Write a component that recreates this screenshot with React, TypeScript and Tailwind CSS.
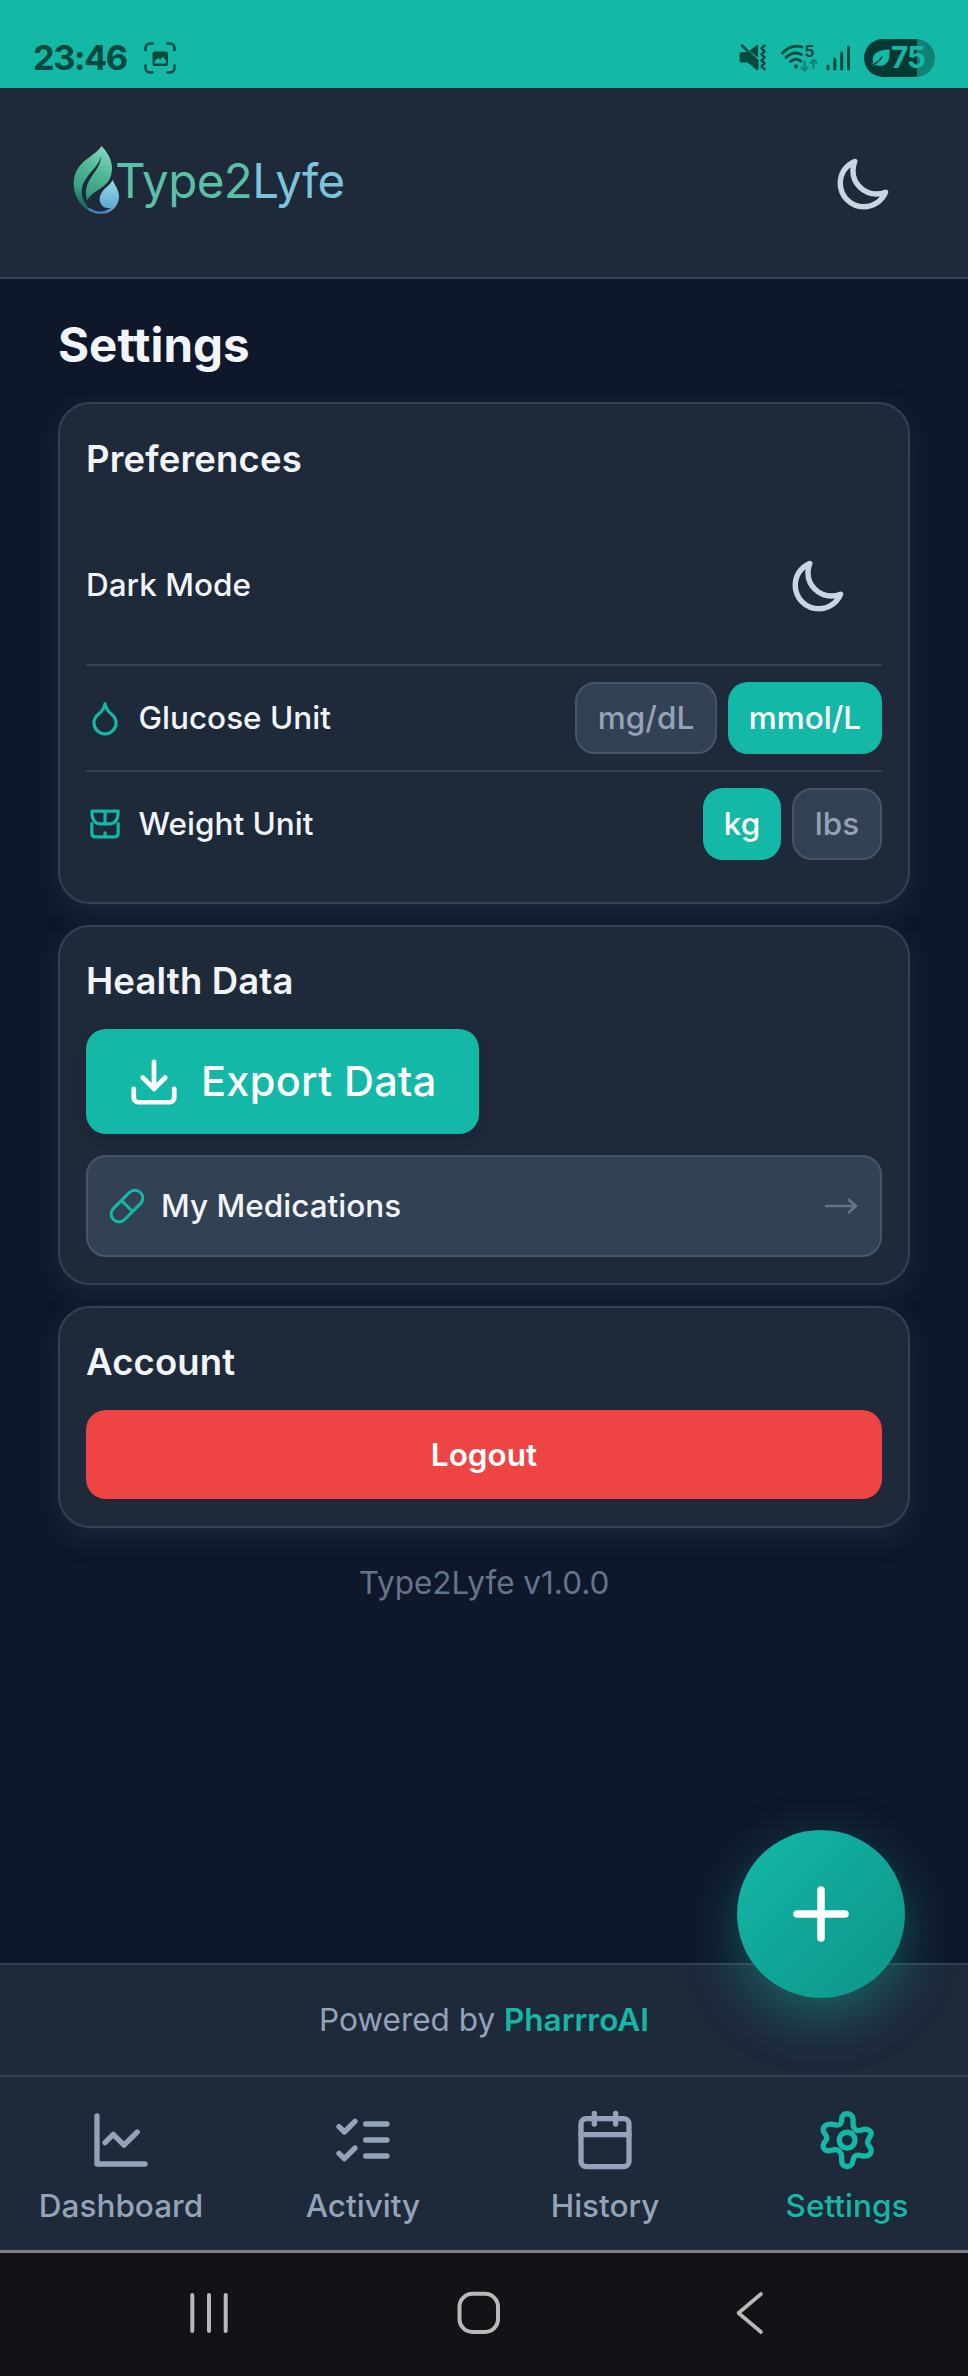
import React from "react";

const MOON =
  "M21.752 15.002A9.718 9.718 0 0 1 18 15.75c-5.385 0-9.75-4.365-9.75-9.75 0-1.33.266-2.597.748-3.752A9.753 9.753 0 0 0 3 11.25C3 16.635 7.365 21 12.75 21a9.753 9.753 0 0 0 9.002-5.998Z";

function Moon() {
  return (
    <svg className="h-[58px] w-[58px] text-[#cbd5e1]" viewBox="0 0 24 24" fill="none" stroke="currentColor" strokeWidth="2.25" strokeLinecap="round" strokeLinejoin="round">
      <path d={MOON} />
    </svg>
  );
}

function Logo() {
  return (
    <svg className="h-[72px] w-[48px]" viewBox="216 433 144 216">
      <defs>
        <linearGradient id="leaf" x1="0.6" y1="0" x2="0.3" y2="1">
          <stop offset="0" stopColor="#7fd4bb" />
          <stop offset="0.35" stopColor="#4fb897" />
          <stop offset="0.7" stopColor="#3c9f82" />
          <stop offset="1" stopColor="#0c5a55" />
        </linearGradient>
        <linearGradient id="drop" x1="0.5" y1="0" x2="0.5" y2="1">
          <stop offset="0" stopColor="#9bd8e6" />
          <stop offset="1" stopColor="#509fd0" />
        </linearGradient>
      </defs>
      <path d="M305 439C290 461 268 470 250 487C230 506 221 527 221 553C221 592 244 622 272 637L274 631C262 622 250 606 246 588C242 566 249 549 262 531C277 511 296 496 303 470C302 500 282 518 269 540C257 560 255 582 261 603C270 586 290 573 307 562C327 549 336 530 336 505C336 478 320 456 305 439Z" fill="url(#leaf)" />
      <path d="M266 627C288 644 318 643 338 623" fill="none" stroke="#4a83bd" strokeWidth="7" />
      <path d="M338 541C344 556 357 570 357 592C357 612 343 634 314 643C326 634 331 629 335 625H323C309 624 299 614 299 598C299 572 329 560 338 541Z" fill="url(#drop)" />
    </svg>
  );
}

function StatusBar() {
  return (
    <div className="flex h-[88px] shrink-0 items-start justify-between bg-[#14b8a6] pr-[33px] pl-[33px] pt-[38px] text-[#05493f]">
      <div className="flex items-center">
        <span className="w-[111px] text-[34.5px] leading-[40px] font-bold tracking-[-1.5px] whitespace-nowrap">23:46</span>
        <svg className="h-[32px] w-[32px]" viewBox="0 0 32 32" fill="none" stroke="currentColor" strokeWidth="2.6" strokeLinecap="round">
          <path d="M1.5 8V6a4.500 4.500 0 0 1 4.500-4.500H8.500M23.500 1.500H26a4.500 4.500 0 0 1 4.500 4.500V8M30.500 23.500V26a4.500 4.500 0 0 1-4.500 4.500h-2.500M8.500 30.500H6A4.500 4.500 0 0 1 1.500 26v-2.500" />
          <path fillRule="evenodd" stroke="none" fill="currentColor" d="M11 9.500H21.500A2.500 2.500 0 0 1 24 12V21.500A2.500 2.500 0 0 1 21.500 24H11A2.500 2.500 0 0 1 8.500 21.500V12A2.500 2.500 0 0 1 11 9.500ZM10.500 21.500H22L22 19L19 14.500L16.500 17.500L13.500 16L10.500 20Z" />
        </svg>
      </div>
      <div className="flex items-center pt-px">
        <svg className="h-[38px] w-[126px]" viewBox="0 0 126 38" fill="none" stroke="currentColor" strokeLinecap="round" strokeLinejoin="round">
          <path d="M3.500 13.500H9L20 23.500V30.500L18.800 30.500L9.500 23H3.500Q2 23 2 21.500V15Q2 13.500 3.500 13.500Z" fill="currentColor" strokeWidth="1" />
          <path d="M19.500 6.500V17.500L12.500 11.500Z" fill="currentColor" strokeWidth="1.200" />
          <path d="M4 6.500L19.500 22" strokeWidth="2.600" />
          <path d="M26.500 6.500l-3 2.900 3 3-3 3 3 3-3 3 3 3-3 3 3 2.600" strokeWidth="2.500" />
          <path d="M44.500 14C51 7 58 6 64 8M48 18.500C53 13.500 58 12.800 63.500 15.500M52.500 22.500C56 19.500 59.500 19.500 62.500 22" strokeWidth="2.800" />
          <circle cx="58" cy="27.500" r="2" fill="currentColor" stroke="none" />
          <path d="M66.500 22.500v9m-3-3 3 3.200 3-3.200M75.500 29v-8m-3 3 3-3.200 3 3.200" strokeWidth="2.200" opacity="0.45" />
          <path d="M90 27v3M96.800 20v10M103.700 14v16M110.500 8v22" strokeWidth="3" />
          <text x="66.500" y="18" fontSize="15.500" fontWeight="700" fill="currentColor" stroke="none">5</text>
        </svg>
        <div className="flex h-[38px] w-[71px] items-center overflow-hidden rounded-full bg-[linear-gradient(90deg,#043a33_53px,#0e8177_53px)] pl-[5px] text-[#14b8a6]">
          <svg className="h-[18px] w-[21px]" viewBox="0 0 20 18" preserveAspectRatio="none">
            <path d="M19.500 0.500C20 8 19 17 10.500 16.800C8.500 16.800 7 16.300 6 15.500C4 17 2.500 17 0.800 16.800C2 15.500 3.500 14.500 4 13.500C2 5 8 1 19.500 0.500Z" fill="currentColor" />
            <path d="M1 16.500C6 15 10.500 11.500 12.500 7.500" stroke="#043a33" strokeWidth="1.500" fill="none" />
          </svg>
          <span className="ml-px -mt-[3px] text-[29.5px] leading-[34px] font-bold tracking-[-0.8px]">75</span>
        </div>
      </div>
    </div>
  );
}

function Card({ title, className, children }: { title: string; className: string; children: React.ReactNode }) {
  return (
    <section className={"rounded-[32px] border-2 border-[#334154] bg-[#1e293a] px-[26px] shadow-[0_9px_27px_rgba(51,65,85,0.4)] " + className}>
      <h2 className="text-[36.5px] leading-[54px] font-semibold tracking-[0.15px]">{title}</h2>
      {children}
    </section>
  );
}

function Unit({ label, active, className }: { label: string; active?: boolean; className: string }) {
  return (
    <button
      className={
        "h-[72px] rounded-[20px] text-[31.5px] leading-[40px] font-medium " +
        (active ? "bg-[#14b8a6] text-white " : "border-2 border-[#475569] bg-[#334154] text-[#94a3b8] ") +
        className
      }
    >
      {label}
    </button>
  );
}

function NavItem({ label, active, children }: { label: string; active?: boolean; children: React.ReactNode }) {
  return (
    <div className={"flex flex-col items-center pt-[31px] " + (active ? "text-[#14b8a6]" : "text-[#94a3b8]")}>
      <svg className="h-[64px] w-[64px]" viewBox="0 0 24 24" fill="none" stroke="currentColor" strokeWidth="2" strokeLinecap="round" strokeLinejoin="round">
        {children}
      </svg>
      <span className="mt-[14px] text-[31.5px] leading-[40px] font-medium">{label}</span>
    </div>
  );
}

export default function App() {
  return (
    <div className="flex h-[2376px] w-[968px] flex-col overflow-hidden bg-[#0f172a] font-['Inter',sans-serif] text-[#f1f5f9]">
      <StatusBar />
      <header className="flex h-[191px] shrink-0 items-center justify-between border-b-2 border-[#334154] bg-[#1e293a] pr-[77px] pl-[72px]">
        <div className="flex items-center pb-[5px]">
          <Logo />
          <span className="-ml-[5px] pt-[2px] text-[47.5px] leading-[60px] font-normal tracking-[-0.6px] text-[#5cbfa7]">
            Type2<span className="text-[#7dc3dc]">Lyfe</span>
          </span>
        </div>
        <div className="pt-[4px]">
          <Moon />
        </div>
      </header>

      <main className="flex min-h-0 flex-1 flex-col px-[58px] pt-[36px]">
        <h1 className="text-[47.5px] leading-[60px] font-bold">Settings</h1>

        <Card title="Preferences" className="mt-[27px] h-[502px] shrink-0 pt-[28px]">
          <div className="mt-[20px] flex h-[160px] items-center justify-between border-b-2 border-[#334154] text-[31.5px] leading-[44px] font-medium">
            Dark Mode
            <div className="flex w-[130px] justify-center pt-[4px]">
              <Moon />
            </div>
          </div>
          <div className="flex h-[106px] items-center border-b-2 border-[#334154]">
            <svg className="h-[38px] w-[38px] text-[#14b8a6]" viewBox="0 0 24 24" fill="none" stroke="currentColor" strokeWidth="2" strokeLinecap="round" strokeLinejoin="round">
              <path d="M12 22a7 7 0 0 0 7-7c0-2-1-3.900-3-5.500s-3.500-4-4-6.500c-.5 2.500-2 4.900-4 6.500C6 11.100 5 13 5 15a7 7 0 0 0 7 7z" />
            </svg>
            <span className="ml-[14.5px] flex-1 text-[31.5px] leading-[44px] font-medium">Glucose Unit</span>
            <Unit label="mg/dL" className="w-[142px]" />
            <Unit label="mmol/L" active className="ml-[11px] w-[154px]" />
          </div>
          <div className="flex h-[104px] items-center">
            <svg className="h-[38px] w-[38px] text-[#14b8a6]" viewBox="136.500 496.500 114 114" fill="none" stroke="currentColor" strokeWidth="9.500" strokeLinecap="round" strokeLinejoin="round">
              <path d="M154 515H233C233 542 222 553 206 553H181C165 553 154 542 154 515ZM193.500 515V552M154 552V581Q154 592 165 592H222Q233 592 233 581V552M193.500 580V590" />
            </svg>
            <span className="ml-[14.5px] flex-1 text-[31.5px] leading-[44px] font-medium">Weight Unit</span>
            <Unit label="kg" active className="w-[78px]" />
            <Unit label="lbs" className="ml-[11px] w-[90px]" />
          </div>
        </Card>

        <Card title="Health Data" className="mt-[21px] h-[360px] shrink-0 pt-[27px]">
          <button className="mt-[21px] flex h-[105px] w-[393px] items-center rounded-[20px] bg-[#14b8a6] pl-[41px] text-white shadow-[0_6px_12px_rgba(0,0,0,0.1)]">
            <svg className="h-[54px] w-[54px]" viewBox="0 0 24 24" fill="none" stroke="currentColor" strokeWidth="2.100" strokeLinecap="round" strokeLinejoin="round">
              <path d="M21 15v4a2 2 0 0 1-2 2H5a2 2 0 0 1-2-2v-4M7 10l5 5 5-5M12 15V3" />
            </svg>
            <span className="ml-[20px] pb-[2px] text-[41.5px] leading-[54px] font-medium tracking-[0.3px]">Export Data</span>
          </button>
          <div className="mt-[21px] flex h-[102px] items-center rounded-[20px] border-2 border-[#475569] bg-[#334154] pr-[22px] pl-[20px]">
            <svg className="h-[38px] w-[38px] text-[#14b8a6]" viewBox="0 0 24 24" fill="none" stroke="currentColor" strokeWidth="1.900" strokeLinecap="round" strokeLinejoin="round">
              <path d="m10.500 20.500 10-10a4.950 4.950 0 1 0-7-7l-10 10a4.950 4.950 0 1 0 7 7ZM8.500 8.500l7 7" />
            </svg>
            <span className="ml-[15px] flex-1 text-[31.5px] leading-[44px] font-medium">My Medications</span>
            <svg className="h-[16px] w-[34px] text-[#64748b]" viewBox="0 0 34 16" fill="none" stroke="currentColor" strokeWidth="2.600">
              <path d="M1 8H32M24 1L32 8L24 15" />
            </svg>
          </div>
        </Card>

        <Card title="Account" className="mt-[21px] h-[222px] shrink-0 pt-[27px]">
          <button className="mt-[21px] h-[89px] w-full rounded-[20px] bg-[#ef4444] text-[31.5px] leading-[44px] font-semibold text-white">Logout</button>
        </Card>

        <p className="mt-[33px] text-center text-[31.5px] leading-[44px] text-[#64748b]">Type2Lyfe v1.0.0</p>
      </main>

      <footer className="relative flex h-[112px] shrink-0 items-center justify-center border-t-2 border-[#334154] bg-[#1e293a] text-[31.5px] leading-[44px] text-[#94a3b8]">
        <p>
          Powered by <span className="font-semibold text-[#14b8a6]">PharrroAI</span>
        </p>
        <button className="absolute -top-[135px] right-[63px] flex h-[168px] w-[168px] items-center justify-center rounded-full bg-linear-to-br from-[#14b8a6] to-[#0d9488] text-white shadow-[0_18px_54px_rgba(20,184,166,0.4)]">
          <svg className="h-[56px] w-[56px]" viewBox="0 0 56 56" stroke="currentColor" strokeWidth="7.500" strokeLinecap="round">
            <path d="M28 4V52M4 28H52" />
          </svg>
        </button>
      </footer>

      <nav className="grid h-[175px] shrink-0 grid-cols-4 border-t-2 border-[#334154] bg-[#1e293a]">
        <NavItem label="Dashboard">
          <path d="M3 3v18h18M6 13l3.100-3.100 4 4L18.100 9" />
        </NavItem>
        <NavItem label="Activity">
          <path d="m3 17 2 2 4-4M3 7l2 2 4-4M13 6h8M13 12h8M13 18h8" />
        </NavItem>
        <NavItem label="History">
          <path d="M8 2v4M16 2v4M3 10h18" />
          <rect x="3" y="4" width="18" height="18" rx="2" />
        </NavItem>
        <NavItem label="Settings" active>
          <g transform="matrix(0.126 0 0 0.126 -125.340 -63.348)" strokeWidth="15.900">
            <path d="M1090 520C1080 520 1074 527 1074 536V542C1073 551 1064 556 1055 553L1045 551C1032 549 1019 556 1019 568C1019 579 1030 581 1030 592C1030 602 1019 602 1019 614C1019 627 1030 632 1041 629L1053 627C1065 625 1074 635 1074 647V660C1074 670 1080 677 1090 677C1101 677 1107 669 1108 659C1108 649 1115 643 1122 643C1131 643 1135 647 1145 646C1156 645 1162 638 1162 628C1162 618 1151 615 1151 605C1151 594 1162 589 1162 579C1162 571 1153 566 1144 566C1136 566 1132 570 1124 570C1115 570 1109 562 1108 553V536C1108 527 1101 520 1090 520Z" />
            <circle cx="1090.500" cy="598.500" r="23.500" />
          </g>
        </NavItem>
      </nav>

      <div className="flex h-[126px] shrink-0 items-start justify-between border-t-[3px] border-[#7e8189] bg-[#121317] pt-[38px] pr-[197px] pl-[187px] text-[#b9b9ba]">
        <svg className="h-[44px] w-[44px]" viewBox="0 0 44 44" fill="none" stroke="currentColor" strokeWidth="4" strokeLinecap="round">
          <path d="M5.300 4V40M22 4V40M38.700 4V40" />
        </svg>
        <svg className="h-[44px] w-[44px]" viewBox="0 0 44 44" fill="none" stroke="currentColor" strokeWidth="4">
          <rect x="2.500" y="2.800" width="38.500" height="38.200" rx="13" />
        </svg>
        <svg className="h-[44px] w-[44px]" viewBox="0 0 44 44" fill="none" stroke="currentColor" strokeWidth="3.600" strokeLinecap="round" strokeLinejoin="round">
          <path d="M34 3L11.500 22L34 41" />
        </svg>
      </div>
    </div>
  );
}
